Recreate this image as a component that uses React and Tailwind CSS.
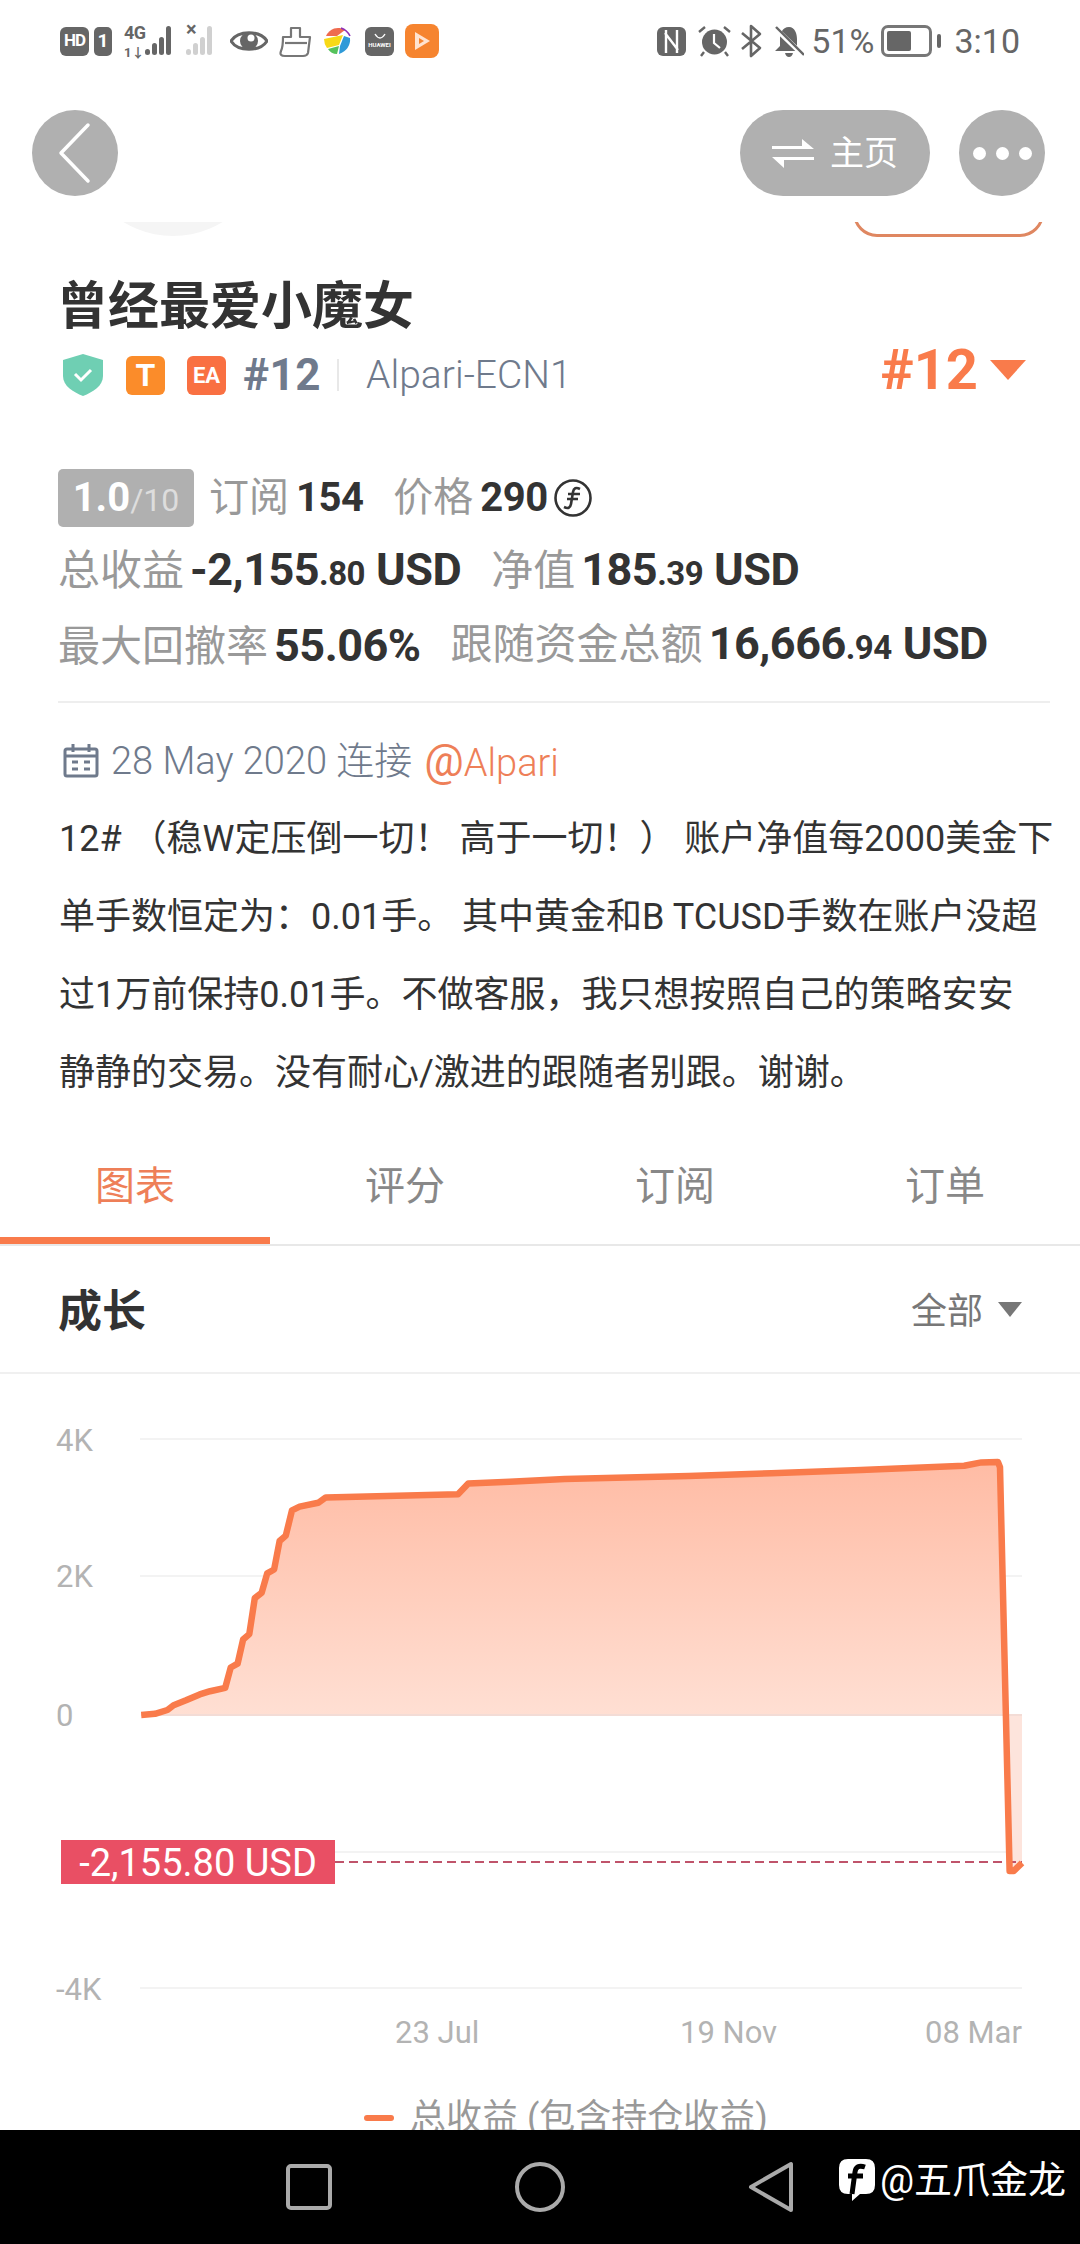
import React from 'react';

const FONT = 'font-[Roboto,"Noto_Sans_CJK_SC",sans-serif]';

// curve points read off the chart, in crop coordinates
const RAW_CURVE = [
  [205, 585], [225, 583], [243, 576], [252, 567], [270, 558], [290, 547], [305, 541], [327, 535],
  [335, 497], [345, 490], [353, 445], [362, 435], [370, 368], [380, 358], [388, 322], [398, 315],
  [406, 262], [415, 252], [424, 205], [435, 198], [462, 191], [473, 181], [665, 175], [680, 155],
  [740, 152], [820, 147], [1000, 141], [1120, 136], [1250, 130], [1400, 122], [1425, 116], [1449, 115],
  [1452, 125], [1466, 875], [1472, 875], [1484, 860],
];
const CURVE = RAW_CURVE.map(([x, y]) => [x / 1.452, 26 + y / 1.858]);
const LINE_PATH = CURVE.map(([x, y], i) => `${i ? 'L' : 'M'}${x.toFixed(1)} ${y.toFixed(1)}`).join(' ');
const ZERO_Y = 341;
const AREA_PATH = `${LINE_PATH} L1022 ${ZERO_Y} L141 ${ZERO_Y} Z`;

const DESCRIPTION = [
  '12# （稳W定压倒一切！ 高于一切！） 账户净值每2000美金下',
  '单手数恒定为：0.01手。 其中黄金和B TCUSD手数在账户没超',
  '过1万前保持0.01手。不做客服，我只想按照自己的策略安安',
  '静静的交易。没有耐心/激进的跟随者别跟。谢谢。',
];

const TABS = ['图表', '评分', '订阅', '订单'];

const Bars = ({ faded }) => (
  <svg width="32" height="32" viewBox="0 0 32 32" fill={faded ? '#d0d0d0' : '#666'}>
    <rect x="0" y="24" width="5" height="6" rx="2.5" />
    <rect x="7" y="18" width="5" height="12" rx="2.5" />
    <rect x="14" y="12" width="5" height="18" rx="2.5" />
    <rect x="21" y="1" width="5" height="29" rx="2.5" />
  </svg>
);

const StatusLeft = () => (
  <div className="flex items-center">
    <div className="w-[29px] h-[29px] rounded-[6px] bg-[#666] text-white text-[17px] font-bold flex items-center justify-center tracking-[-1px]">HD</div>
    <div className="ml-[5px] w-[18px] h-[29px] rounded-[5px] bg-[#666] text-white text-[19px] font-bold flex items-center justify-center">1</div>
    <div className="ml-[12px] w-[21px] flex flex-col text-[#666] font-bold leading-none">
      <span className="text-[18px] tracking-[-0.5px]">4G</span>
      <span className="text-[13px] mt-[4px]">1↓</span>
    </div>
    <Bars />
    <div className="relative ml-[9px] w-[32px] h-[32px]">
      <Bars faded />
      <span className="absolute left-0 top-[-6px] text-[#666] text-[20px] font-bold leading-none">×</span>
    </div>
    <svg className="ml-[12px]" width="38" height="28" viewBox="0 0 38 28">
      <path d="M1 14 C8 3 30 3 37 14 C30 25 8 25 1 14Z" fill="none" stroke="#666" strokeWidth="3" />
      <circle cx="19" cy="14" r="9" fill="#666" />
      <circle cx="21" cy="11" r="3.5" fill="#fff" />
    </svg>
    <svg className="ml-[11px]" width="33" height="33" viewBox="0 0 33 33" fill="none" stroke="#777" strokeWidth="2.2" strokeLinejoin="round">
      <path d="M4 12 H12 V3 H21 V12 H31 L29 28 Q28 31 24 31 H6 Q0 31 2 26 Q4 22 4 12Z" />
      <path d="M6 18 H28" />
    </svg>
    <svg className="ml-[11px]" width="28" height="28" viewBox="0 0 28 28">
      <path d="M3 9 A13 13 0 0 1 22 3 L14 9Z" fill="#ef6b4f" />
      <path d="M1 12 L20 8 L16 18 L4 21 Q1 17 1 12Z" fill="#f7d916" />
      <path d="M5 22 L16 19 L14 27 Q8 27 5 22Z" fill="#55c25c" />
      <path d="M17 19 L21 9 L27 11 Q28 22 16 27Z" fill="#2f9ad8" />
      <path d="M18 1 Q24 3 27 9" fill="none" stroke="#8c2fb8" strokeWidth="1.6" />
    </svg>
    <div className="ml-[14px] w-[29px] h-[29px] rounded-[6px] bg-[#666] flex flex-col items-center justify-center">
      <svg width="12" height="7" viewBox="0 0 12 7"><path d="M1 1 Q6 9 11 1" fill="none" stroke="#fff" strokeWidth="1.4" /></svg>
      <span className="text-white text-[6px] leading-[9px] font-bold">HUAWEI</span>
    </div>
    <div className="ml-[11px] w-[34px] h-[34px] rounded-[8px] bg-[#f6842f] flex items-center justify-center">
      <svg width="20" height="22" viewBox="0 0 20 22">
        <path d="M3 2 L18 11 L3 20Z" fill="#ffe3d0" />
        <path d="M7 8 L12 11 L7 14Z" fill="#f6842f" />
      </svg>
    </div>
  </div>
);

const StatusRight = () => (
  <div className="flex items-center">
    <svg width="29" height="29" viewBox="0 0 29 29">
      <rect width="29" height="29" rx="6" fill="#666" />
      <path d="M9 3 V26 M20 3 V26 M8 6 L21 23" stroke="#fff" strokeWidth="2.4" fill="none" />
    </svg>
    <svg className="ml-[12px]" width="33" height="32" viewBox="0 0 33 32">
      <circle cx="16.5" cy="17" r="12.5" fill="#666" />
      <path d="M16 9 V18 L22 23" stroke="#fff" strokeWidth="2.2" fill="none" />
      <path d="M1 7 L7 2 M32 7 L26 2 M6 27 L3 31 M27 27 L30 31" stroke="#666" strokeWidth="2.4" />
    </svg>
    <svg className="ml-[10px]" width="21" height="34" viewBox="0 0 21 34" fill="none" stroke="#666" strokeWidth="2.6" strokeLinejoin="round">
      <path d="M1 9 L19 24 L10 32 V2 L19 10 L1 25" />
    </svg>
    <svg className="ml-[12px]" width="30" height="31" viewBox="0 0 30 31" fill="#666">
      <path d="M15 1 C8 1 6 8 6 13 V20 L1 25 H27 L23 20 V13 C23 8 21 1 15 1Z" />
      <path d="M11 27 H19 Q18 31 15 31 Q12 31 11 27Z" />
      <path d="M1 2 L29 29" stroke="#fff" strokeWidth="5" />
      <path d="M2 1 L30 29" stroke="#666" strokeWidth="2.4" />
    </svg>
    <span className="ml-[7px] text-[34px] leading-none text-[#666]">51%</span>
    <div className="ml-[7px] w-[51px] h-[32px] rounded-[7px] border-[3px] border-[#777] p-[3px]">
      <div className="w-[24px] h-full rounded-[2px] bg-[#666]" />
    </div>
    <div className="ml-[5px] w-[4px] h-[14px] rounded-[2px] bg-[#666]" />
    <span className="ml-[13px] text-[34px] leading-none text-[#666]">3:10</span>
  </div>
);

const Metric = ({ label, value, cents, unit, className = '' }) => (
  <span className={`flex items-baseline whitespace-nowrap ${className}`}>
    <span className="text-[#999] mr-[7px]">{label}</span>
    <span className="font-bold text-[#333] tracking-[-0.5px]">
      {value}
      {cents && <span className="text-[34px]">{cents}</span>}
      {unit && <span className="ml-[11px]">{unit}</span>}
    </span>
  </span>
);

const BigMetric = ({ label, value, cents, unit, className = '' }) => (
  <span className={`flex items-baseline whitespace-nowrap ${className}`}>
    <span className="text-[#999] text-[42px] mr-[6px]">{label}</span>
    <span className="font-bold text-[#333] text-[45px] tracking-[-0.5px]">
      {value}
      {cents && <span className="text-[33px]">{cents}</span>}
      {unit && <span className="ml-[11px]">{unit}</span>}
    </span>
  </span>
);

const Header = () => (
  <div className="h-[140px] pl-[32px] pr-[35px] pt-[28px] flex items-start justify-between">
    <button className="w-[86px] h-[86px] rounded-full bg-[#b0b0b0] flex items-center justify-center">
      <svg width="36" height="62" viewBox="0 0 36 62" fill="none" stroke="#fff" strokeWidth="3.5" strokeLinecap="round" strokeLinejoin="round">
        <path d="M31 3 L4 31 L31 59" />
      </svg>
    </button>
    <div className="flex gap-[29px]">
      <button className="w-[190px] h-[86px] rounded-full bg-[#b0b0b0] flex items-center justify-center gap-[16px] text-white text-[34px]">
        <svg width="42" height="32" viewBox="0 0 42 32" fill="#fff">
          <path d="M0 9 H30 V2 L42 12 H0Z" />
          <path d="M42 20 H0 L12 31 V23 H42Z" />
        </svg>
        <span>主页</span>
      </button>
      <button className="w-[86px] h-[86px] rounded-full bg-[#b0b0b0] flex items-center justify-center gap-[10px]">
        <span className="w-[13px] h-[13px] rounded-full bg-white" />
        <span className="w-[13px] h-[13px] rounded-full bg-white" />
        <span className="w-[13px] h-[13px] rounded-full bg-white" />
      </button>
    </div>
  </div>
);

const Chart = () => (
  <div className="relative h-[686px]">
    <svg width="1080" height="686" viewBox="0 0 1080 686">
      <defs>
        <linearGradient id="growth" gradientUnits="userSpaceOnUse" x1="0" y1="70" x2="0" y2="489">
          <stop offset="0" stopColor="#ffb9a1" />
          <stop offset="0.645" stopColor="#ffdfd3" />
          <stop offset="0.65" stopColor="#fde4dc" />
          <stop offset="1" stopColor="#fde4dc" />
        </linearGradient>
      </defs>
      {[65, 202, 478, 614].map((y) => (
        <line key={y} x1="140" x2="1022" y1={y} y2={y} stroke="#f3f3f3" strokeWidth="2" />
      ))}
      <path d={AREA_PATH} fill="url(#growth)" />
      <line x1="141" x2="1022" y1={ZERO_Y} y2={ZERO_Y} stroke="#f3dcd6" strokeWidth="2" />
      <line x1="335" x2="1022" y1="488" y2="488" stroke="#c0546b" strokeWidth="2" strokeDasharray="9 5" />
      <path d={LINE_PATH} fill="none" stroke="#f97b4b" strokeWidth="6.5" strokeLinejoin="round" />
      <g fill="#b3b3b3" fontSize="31">
        <text x="56" y="77">4K</text>
        <text x="56" y="213">2K</text>
        <text x="56" y="352">0</text>
        <text x="56" y="626">-4K</text>
        <text x="395" y="669">23 Jul</text>
        <text x="680" y="669">19 Nov</text>
        <text x="925" y="669">08 Mar</text>
      </g>
    </svg>
    <div className="absolute left-[61px] top-[466px] w-[274px] h-[44px] bg-[#e94f64] text-white text-[38px] leading-[46px] text-center overflow-hidden whitespace-nowrap">
      -2,155.80 USD
    </div>
  </div>
);

const App = () => (
  <div className={`w-[1080px] h-[2244px] bg-white flex flex-col overflow-hidden ${FONT}`}>
    <main className="flex-1 overflow-hidden">
      <div className="h-[82px] pl-[60px] pr-[60px] flex items-center justify-between">
        <StatusLeft />
        <StatusRight />
      </div>
      <Header />

      {/* bottom of the scrolled away avatar and follow button */}
      <div className="h-[18px] pl-[78px] pr-[36px] flex justify-between overflow-hidden">
        <div className="w-[190px] h-[190px] -mt-[176px] rounded-full bg-[#f5f5f5]" />
        <div className="w-[191px] h-[60px] -mt-[45px] rounded-[24px] border-[3px] border-[#df8761]" />
      </div>

      <div className="px-[60px]">
        <h1 className="mt-[37px] -ml-[3px] text-[51px] leading-[60px] font-bold text-[#333] whitespace-nowrap">曾经最爱小魔女</h1>

        <div className="mt-[13px] h-[50px] flex items-center justify-between">
          <div className="flex items-center text-[#6f7a8c]">
            <svg className="ml-[3px]" width="40" height="42" viewBox="0 0 40 42">
              <path d="M20 0 L40 6 V22 C40 32 30 38 20 42 C10 38 0 32 0 22 V6Z" fill="#6fcfb3" />
              <path d="M12 20 L18 26 L28 16" fill="none" stroke="#fff" strokeWidth="3" />
            </svg>
            <div className="ml-[23px] w-[39px] h-[39px] rounded-[6px] bg-[#fb8c2a] text-white text-[32px] font-bold flex items-center justify-center">T</div>
            <div className="ml-[22px] w-[39px] h-[39px] rounded-[6px] bg-[#f97042] text-white text-[22px] font-bold flex items-center justify-center">EA</div>
            <span className="ml-[17px] text-[44px] font-bold leading-none tracking-[0.5px]">#12</span>
            <span className="ml-[16px] w-[2px] h-[32px] bg-[#e8e8e8]" />
            <span className="ml-[27px] text-[39px] leading-none font-light">Alpari-ECN1</span>
          </div>
          <div className="flex items-center -mr-[6px] mb-[10px]">
            <span className="text-[56px] font-bold leading-none text-[#f97b4b]">#12</span>
            <span className="ml-[12px] -mt-[1px] w-0 h-0 border-x-[18px] border-x-transparent border-t-[20px] border-t-[#f97b4b]" />
          </div>
        </div>

        <div className="mt-[69px] flex flex-col text-[40px] leading-[58px]">
          <div className="h-[58px] flex items-center">
            <div className="-ml-[2px] w-[136px] h-[58px] rounded-[5px] bg-[#b0b0b0] text-white font-bold flex items-baseline justify-center">
              <span>1.0</span>
              <span className="text-[32px] font-normal text-[#ddd]">/10</span>
            </div>
            <Metric className="ml-[15px]" label="订阅" value="154" />
            <Metric className="ml-[30px]" label="价格" value="290" />
            <svg className="ml-[6px]" width="38" height="38" viewBox="0 0 38 38" fill="none" stroke="#333" strokeWidth="2.6">
              <circle cx="19" cy="19" r="17.5" />
              <path d="M26 10 Q20 7 19 13 L17 25 Q16 31 10 28 M14 15 H26 M13 20 H24" />
            </svg>
          </div>
          <div className="mt-[16px] -ml-[2px] h-[58px] flex items-center">
            <BigMetric label="总收益" value="-2,155" cents=".80" unit="USD" />
            <BigMetric className="ml-[30px]" label="净值" value="185" cents=".39" unit="USD" />
          </div>
          <div className="mt-[16px] -ml-[2px] h-[58px] flex items-center">
            <BigMetric label="最大回撤率" value="55.06%" />
            <BigMetric className="ml-[30px]" label="跟随资金总额" value="16,666" cents=".94" unit="USD" />
          </div>
        </div>

        <div className="mt-[26px] -ml-[2px] w-[992px] h-[2px] bg-[#eee]" />

        <div className="mt-[38px] h-[40px] flex items-center text-[38px] leading-none text-[#6f7a8c] font-light">
          <svg className="ml-[3px]" width="36" height="34" viewBox="0 0 36 34" fill="none" stroke="#6f7a8c" strokeWidth="3">
            <rect x="2" y="5" width="32" height="27" rx="2" />
            <path d="M10 0 V8 M26 0 V8 M2 12 H34 M9 18 H15 M21 18 H27 M9 25 H15 M21 25 H27" />
          </svg>
          <span className="ml-[12px] whitespace-nowrap">28 May 2020 连接</span>
          <span className="ml-[12px] text-[#ee7f58] whitespace-nowrap">
            <span className="text-[44px] font-normal">@</span>Alpari
          </span>
        </div>

        <div className="mt-[19px] -ml-[1px] text-[36px] leading-[78px] text-[#333] whitespace-nowrap">
          {DESCRIPTION.map((line) => (
            <p key={line}>{line}</p>
          ))}
        </div>
      </div>

      <div className="mt-[24px] h-[110px] border-b-[2px] border-[#e8e8e8] flex">
        {TABS.map((tab, i) => (
          <div
            key={tab}
            className={`flex-1 flex items-center justify-center text-[40px] border-b-[7px] ${
              i === 0 ? 'text-[#ee7f58] border-[#f97b4b]' : 'text-[#888] border-transparent'
            }`}
          >
            {tab}
          </div>
        ))}
      </div>

      <div className="h-[128px] px-[58px] pt-[5px] border-b-[2px] border-[#f0f0f0] flex items-center justify-between">
        <h2 className="text-[44px] font-bold text-[#333]">成长</h2>
        <div className="flex items-center text-[36px] text-[#777]">
          全部
          <span className="ml-[15px] -mt-[4px] w-0 h-0 border-x-[12px] border-x-transparent border-t-[15px] border-t-[#777]" />
        </div>
      </div>

      <Chart />

      <div className="mt-[36px] pl-[364px] flex items-center">
        <span className="w-[30px] h-[6px] rounded-full bg-[#f97b4b]" />
        <span className="ml-[16px] text-[36px] leading-[44px] text-[#999] whitespace-nowrap">总收益 (包含持仓收益)</span>
      </div>
    </main>

    <nav className="relative h-[114px] bg-black shrink-0 flex items-center">
      <svg className="ml-[285px]" width="48" height="48" viewBox="0 0 48 48" fill="none" stroke="#aaa" strokeWidth="4">
        <rect x="3" y="3" width="42" height="42" rx="3" />
      </svg>
      <svg className="ml-[181px]" width="52" height="52" viewBox="0 0 52 52" fill="none" stroke="#aaa" strokeWidth="4">
        <circle cx="26" cy="26" r="23" />
      </svg>
      <svg className="ml-[182px]" width="46" height="52" viewBox="0 0 46 52" fill="none" stroke="#aaa" strokeWidth="4" strokeLinejoin="round">
        <path d="M43 3 V49 L3 26Z" />
      </svg>
      <div className="absolute left-[838px] top-[28px] flex items-center text-white text-[38px] leading-none whitespace-nowrap">
        <svg width="38" height="44" viewBox="0 0 38 44">
          <path d="M10 1 H28 Q37 1 37 10 V27 Q37 36 28 36 H22 L14 43 V36 H10 Q1 36 1 27 V10 Q1 1 10 1Z" fill="#fff" />
          <path d="M27 9 Q18 6 17 14 L14 36 M10 18 H25" fill="none" stroke="#000" strokeWidth="5" />
        </svg>
        <span className="ml-[4px]">@五爪金龙</span>
      </div>
    </nav>
  </div>
);

export default App;
